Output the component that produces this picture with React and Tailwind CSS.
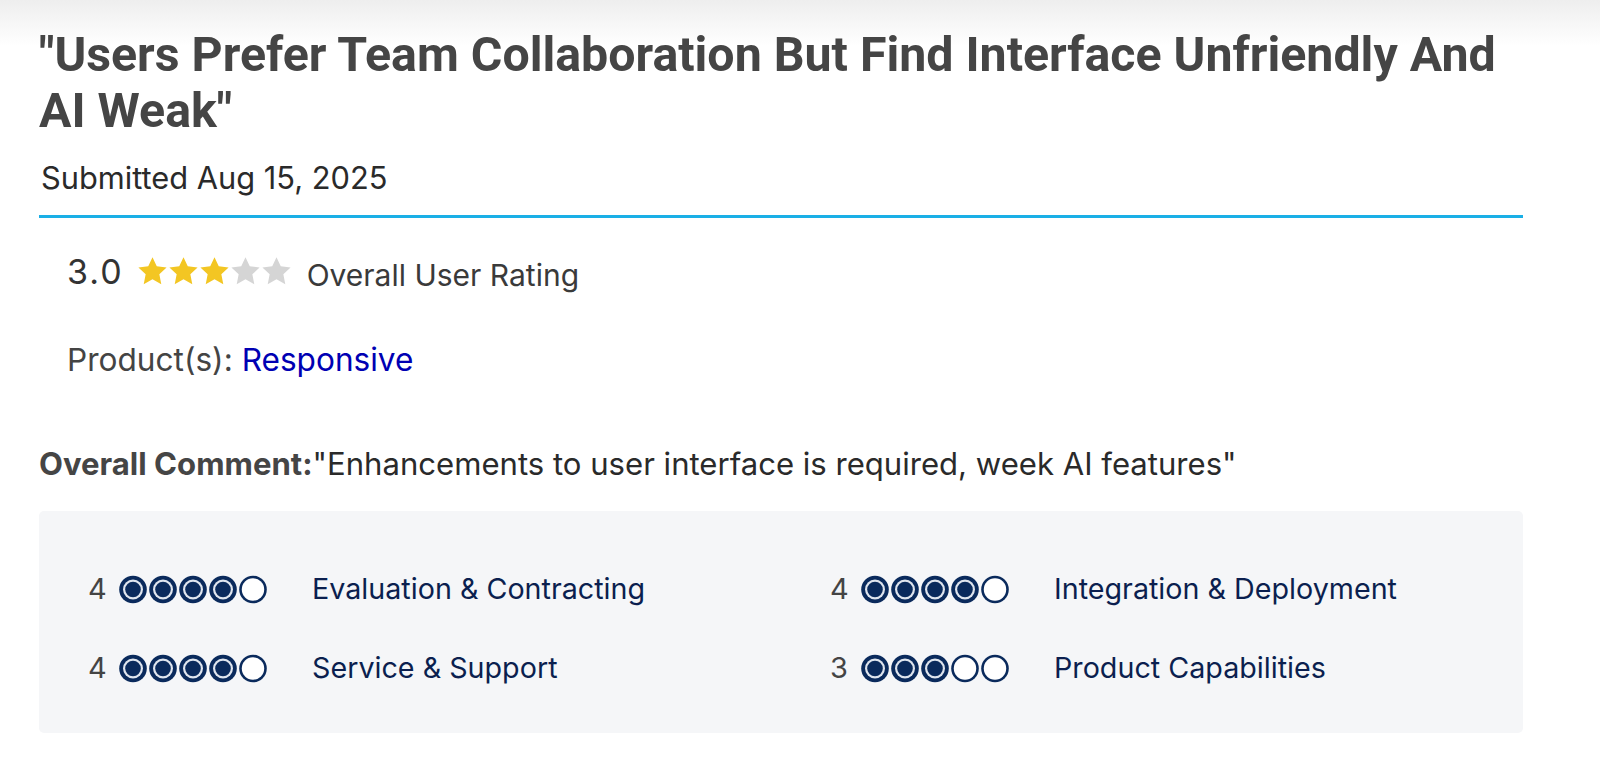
import React from 'react';

function Stars({ value }) {
  return (
    <div className="flex items-center">
      {[1, 2, 3, 4, 5].map((i) => (
        <svg key={i} width="31" height="30" viewBox="0 0 24 23">
          <path
            d="M12 0.8l3.3 7.1 7.6.9-5.6 5.3 1.5 7.6L12 17.9l-6.8 3.8 1.5-7.6L1.1 8.8l7.6-.9z"
            fill={i <= value ? '#f3c623' : '#d5d5d5'}
          />
        </svg>
      ))}
    </div>
  );
}

function Dots({ value }) {
  return (
    <div className="flex items-center">
      {[1, 2, 3, 4, 5].map((i) => (
        <svg key={i} width="30" height="29" viewBox="0 0 30 29">
          <circle cx="15" cy="14.5" r="13.8" fill="#0a2a5c" />
          {i <= value ? (
            <>
              <circle cx="15" cy="14.5" r="10" fill="#dfe5ee" />
              <circle cx="15" cy="14.5" r="7.8" fill="#0a2a5c" />
            </>
          ) : (
            <circle cx="15" cy="14.5" r="11.2" fill="#ffffff" />
          )}
        </svg>
      ))}
    </div>
  );
}

function Score({ value, label }) {
  return (
    <div className="flex h-[40px] items-center">
      <span className="w-[30px] text-[29px] text-[#444]">{value}</span>
      <Dots value={value} />
      <span className="ml-[44px] text-[28.7px] text-[#0b1f4f]">{label}</span>
    </div>
  );
}

export default function App() {
  return (
    <div
      className="min-h-[762px] bg-[linear-gradient(180deg,#eeeeee_0px,#ffffff_46px)]"
      style={{ fontFamily: 'Inter, "Liberation Sans", sans-serif' }}
    >
      <div className="ml-[39px] w-[1484px] pt-[27px]">
        <h1
          className="text-[48.3px] font-bold leading-[56px] text-[#454545]"
          style={{ fontFamily: 'Roboto, "Liberation Sans", sans-serif' }}
        >
          "Users Prefer Team Collaboration But Find Interface Unfriendly And AI Weak"
        </h1>
        <p className="ml-[2px] mt-[20px] text-[30.8px] leading-[38px] text-[#2a2a2a]">Submitted Aug 15, 2025</p>
        <div className="mt-[18px] h-[3px] bg-[#1aafe6]" />

        <div className="ml-[28px] mt-[34px] flex h-[40px] items-center">
          <span className="text-[34px] leading-[40px] tracking-[2px] text-[#333]">3.0</span>
          <div className="ml-[13px] -mt-[3px]">
            <Stars value={3} />
          </div>
          <span className="ml-[15px] mt-[5px] text-[30px] leading-[40px] text-[#3a3a3a]">Overall User Rating</span>
        </div>

        <div className="ml-[28px] mt-[48px] text-[31.6px] leading-[40px] text-[#444]">
          Product(s): <span className="text-[#0000b3]">Responsive</span>
        </div>

        <div className="mt-[65px] text-[31.1px] leading-[38px] text-[#2a2a2a]">
          <span className="font-bold text-[#454545]">Overall Comment:</span>"Enhancements to user interface is required, week AI features"
        </div>

        <div className="mt-[28px] h-[222px] rounded-[5px] bg-[#f5f6f8] pl-[49px] pt-[58px]">
          <div className="grid grid-cols-[742px_1fr] gap-y-[39px]">
            <Score value={4} label="Evaluation & Contracting" />
            <Score value={4} label="Integration & Deployment" />
            <Score value={4} label="Service & Support" />
            <Score value={3} label="Product Capabilities" />
          </div>
        </div>
      </div>
    </div>
  );
}
